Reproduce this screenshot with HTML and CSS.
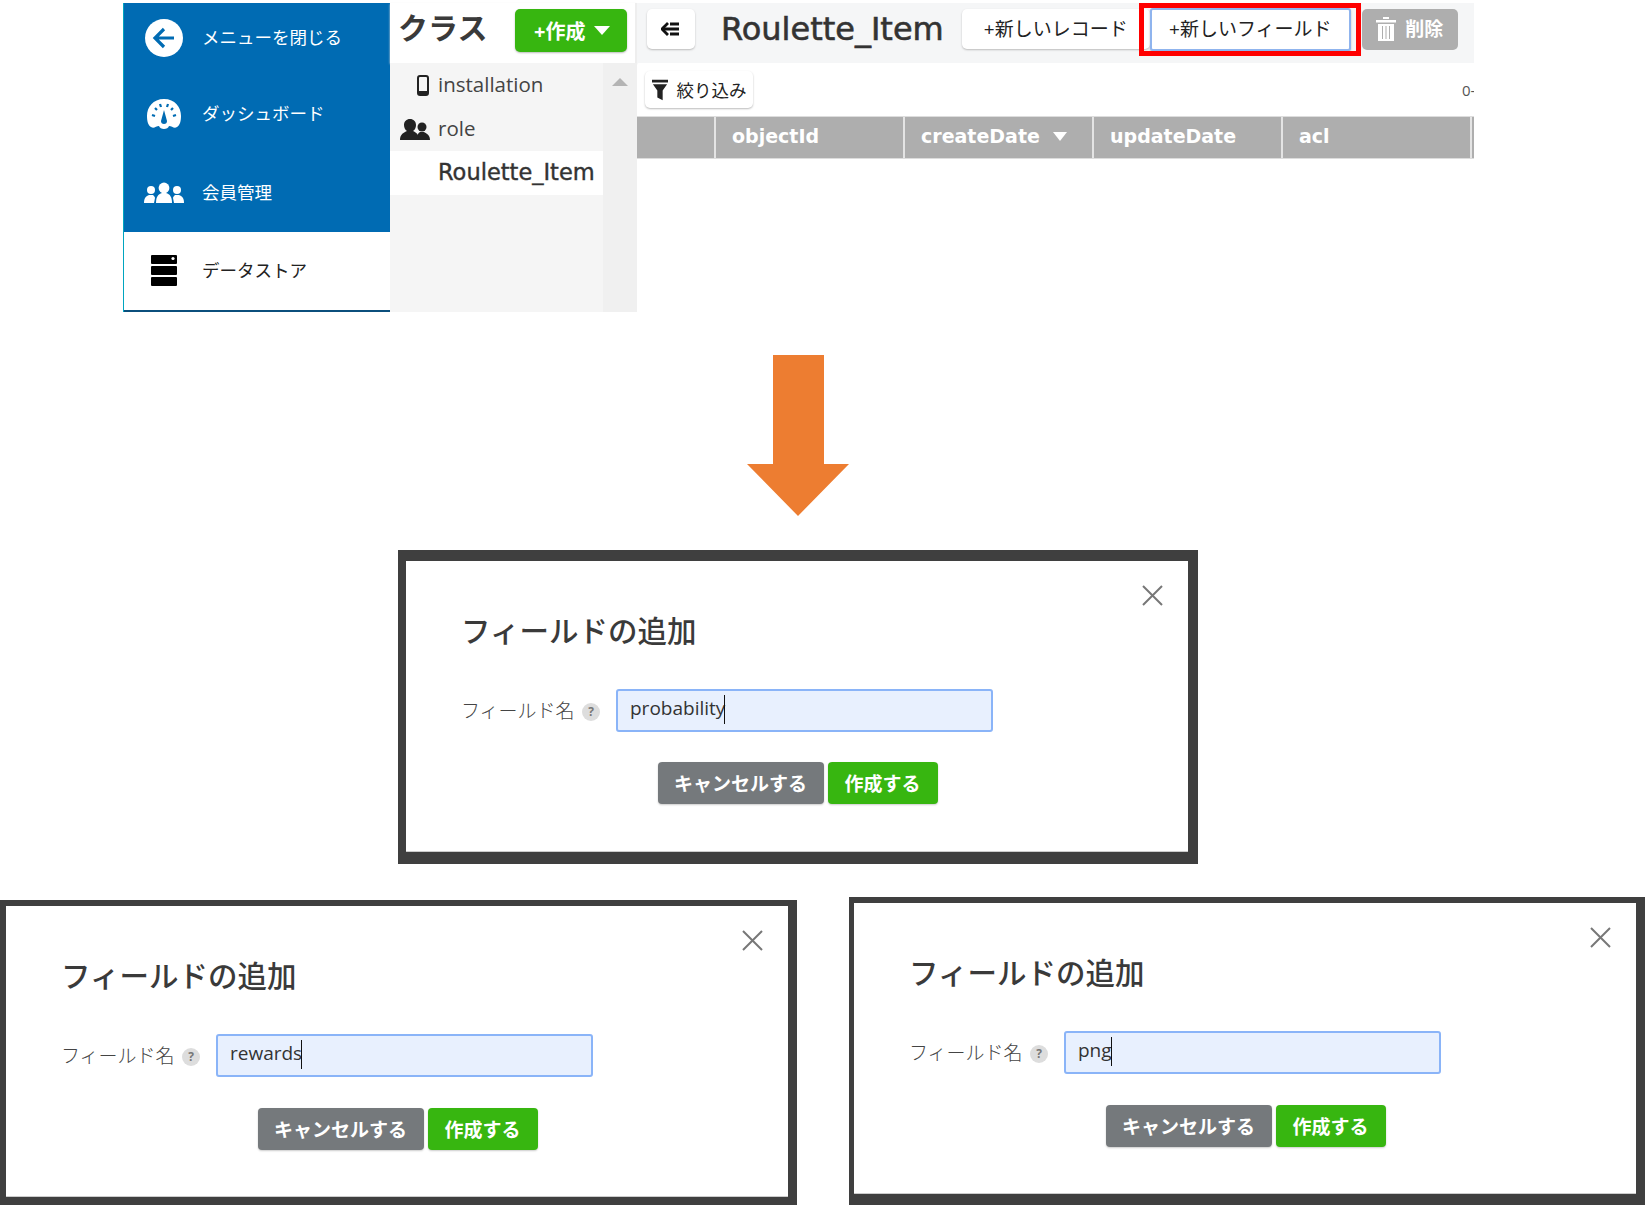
FILE: index.html
```html
<!DOCTYPE html>
<html lang="ja">
<head>
    <meta charset="UTF-8">
    <title>フィールドの追加</title>
    <link rel="stylesheet" href="styles.css">
</head>
<body>
    <!-- Data store screen -->
    <div class="panel">
        <div class="sidebar">
            <div class="nav-item nav-first">
                <svg class="nav-icon" width="40" height="40" viewBox="0 0 40 40">
                    <circle cx="20" cy="20" r="19" fill="#fff"/>
                    <path d="M30 20H12M20 11l-9 9 9 9" fill="none" stroke="#006bb3" stroke-width="3.2"/>
                </svg>
                <span>メニューを閉じる</span>
            </div>
            <div class="nav-item nav-second">
                <svg class="nav-icon" width="40" height="36" viewBox="0 0 40 36">
                    <path d="M20 2C9 2 3 10 3 19c0 5 1 9 4 11 3 2 5-1 8-1 1 4 9 4 10 0 3 0 5 3 8 1 3-2 4-6 4-11C37 10 31 2 20 2z" fill="#fff"/>
                    <path d="M8 18l3 1M11 11l2 2M16 7l1 3M24 7l-1 3M29 11l-2 2M32 18l-3 1" stroke="#006bb3" stroke-width="2.2"/>
                    <path d="M20 13l-3 11a3 3 0 1 0 6 0z" fill="#006bb3"/>
                </svg>
                <span>ダッシュボード</span>
            </div>
            <div class="nav-item">
                <svg class="nav-icon" width="40" height="22" viewBox="0 0 40 22" fill="#fff">
                    <circle cx="7" cy="8" r="4"/>
                    <path d="M0 21c0-5 2-7 5-8h4c1 1 2 2 2 3l-1 5z"/>
                    <circle cx="33" cy="8" r="4"/>
                    <path d="M40 21c0-5-2-7-5-8h-4c-1 1-2 2-2 3l1 5z"/>
                    <circle cx="20" cy="6" r="5.400"/>
                    <path d="M12 21c0-6 2-9 6-10h4c4 1 6 4 6 10z"/>
                </svg>
                <span>会員管理</span>
            </div>
            <div class="nav-item nav-active">
                <svg class="nav-icon" width="28" height="32" viewBox="0 0 28 32">
                    <rect x="1" y="0" width="26" height="9" rx="1"/>
                    <rect x="1" y="11" width="26" height="9" rx="1"/>
                    <rect x="1" y="22" width="26" height="9" rx="1"/>
                    <circle cx="23" cy="3.5" r="1.6" fill="#fff"/>
                </svg>
                <span>データストア</span>
            </div>
        </div>

        <div class="classes">
            <div class="classes-head">
                <h2>クラス</h2>
                <button class="btn-create">+作成<i class="caret"></i></button>
            </div>
            <div class="classes-body">
                <ul class="class-list">
                    <li>
                        <svg class="class-icon" width="14" height="21" viewBox="0 0 14 21">
                            <rect x="2" y="1" width="10" height="19" rx="2" fill="none" stroke="#222" stroke-width="2"/>
                            <rect x="2" y="16" width="10" height="4" fill="#222"/>
                        </svg>
                        installation
                    </li>
                    <li>
                        <svg class="class-icon icon-role" width="30" height="22" viewBox="0 0 30 22" fill="#222">
                            <circle cx="22" cy="8" r="4.500"/>
                            <path d="M17 21c0-5 1-7 3-8h4c2 1 6 3 6 8z"/>
                            <path d="M10 0c3.500 0 6 2.500 6 6 0 2.500-1 5-3 6 3 1.500 6 3 6 9H0c0-6 4-7.500 7-9-2-1-3-3.500-3-6 0-3.500 2.500-6 6-6z"/>
                        </svg>
                        role
                    </li>
                    <li class="class-current">Roulette_Item</li>
                </ul>
                <div class="scrollbar"><i class="scroll-up"></i></div>
            </div>
        </div>

        <div class="main">
            <div class="topbar">
                <button class="btn-white btn-back">
                    <svg width="20" height="14" viewBox="0 0 20 14">
                        <path d="M7 1L1 7l6 6" fill="none" stroke="#111" stroke-width="2.800"/>
                        <path d="M2 7h16M9 2h9M9 12h9" stroke="#111" stroke-width="2.800"/>
                    </svg>
                </button>
                <h1>Roulette_Item</h1>
                <button class="btn-white btn-record">+新しいレコード</button>
                <button class="btn-white btn-field">+新しいフィールド<span class="highlight"></span></button>
                <button class="btn-delete">
                    <svg width="20" height="25" viewBox="0 0 20 25" fill="#fff">
                        <path d="M0 4h20v2.500H0zM7 1h6v2H7z"/>
                        <path d="M2 8h16v17H2zM6 10v13h1V10zM9.500 10v13h1V10zM13 10v13h1V10z" fill-rule="evenodd"/>
                    </svg>
                    削除
                </button>
            </div>
            <div class="toolbar">
                <button class="btn-white btn-filter">
                    <svg width="16" height="22" viewBox="0 0 18 23" fill="#222">
                        <path d="M0 0h18v3H0zM1 5h16l-5 7v11l-6-3v-8z"/>
                    </svg>
                    絞り込み
                </button>
                <span class="pager">0-</span>
            </div>
            <div class="table-head">
                <div class="col col-check"></div>
                <div class="col">objectId</div>
                <div class="col">createDate<i class="caret caret-sort"></i></div>
                <div class="col">updateDate</div>
                <div class="col">acl</div>
            </div>
        </div>
    </div>

    <svg class="down-arrow" width="102" height="161" viewBox="0 0 102 161">
        <path d="M26 0h51v109h25l-51 52L0 109h26z" fill="#ed7d31"/>
    </svg>

    <!-- Add field dialogs -->
    <div class="dialog dialog-main">
        <div class="dialog-inner">
            <svg class="close" width="21" height="21" viewBox="0 0 21 21">
                <path d="M1 1l19 19M20 1L1 20" stroke="#777" stroke-width="2"/>
            </svg>
            <h3>フィールドの追加</h3>
            <div class="field-row">
                <label>フィールド名</label>
                <span class="help">?</span>
                <div class="field-input"><span class="typed">probability</span></div>
            </div>
            <div class="actions">
                <button class="btn-cancel">キャンセルする</button>
                <button class="btn-submit">作成する</button>
            </div>
        </div>
    </div>

    <div class="dialog-row">
        <div class="dialog dialog-left">
            <div class="dialog-inner">
                <svg class="close" width="21" height="21" viewBox="0 0 21 21">
                    <path d="M1 1l19 19M20 1L1 20" stroke="#777" stroke-width="2"/>
                </svg>
                <h3>フィールドの追加</h3>
                <div class="field-row">
                    <label>フィールド名</label>
                    <span class="help">?</span>
                    <div class="field-input"><span class="typed">rewards</span></div>
                </div>
                <div class="actions">
                    <button class="btn-cancel">キャンセルする</button>
                    <button class="btn-submit">作成する</button>
                </div>
            </div>
        </div>

        <div class="dialog dialog-right">
            <div class="dialog-inner">
                <svg class="close" width="21" height="21" viewBox="0 0 21 21">
                    <path d="M1 1l19 19M20 1L1 20" stroke="#777" stroke-width="2"/>
                </svg>
                <h3>フィールドの追加</h3>
                <div class="field-row">
                    <label>フィールド名</label>
                    <span class="help">?</span>
                    <div class="field-input"><span class="typed">png</span></div>
                </div>
                <div class="actions">
                    <button class="btn-cancel">キャンセルする</button>
                    <button class="btn-submit">作成する</button>
                </div>
            </div>
        </div>
    </div>
</body>
</html>
```

FILE: styles.css
```css
* {
    box-sizing: border-box;
}

body {
    font-family: "Open Sans", "Noto Sans CJK JP", sans-serif;
    background-color: #fff;
    color: #333;
    margin: 0;
    height: 1205px;
    width: 1645px;
    overflow: hidden;
}

button {
    font-family: inherit;
    border: none;
    padding: 0;
}

/* Top screen */
.panel {
    display: flex;
    width: 1351px;
    height: 309px;
    margin: 3px 0 0 123px;
}

.sidebar {
    width: 267px;
    flex-shrink: 0;
    background-color: #006bb3;
    border-left: 1px solid #00a5c0;
}

.nav-item {
    position: relative;
    display: flex;
    align-items: center;
    height: 79px;
    padding: 0 0 3px 78px;
    color: #fff;
    font-size: 17.500px;
}

.nav-first {
    height: 69px;
}

.nav-second {
    height: 81px;
    padding-bottom: 1px;
}

.nav-active {
    height: 80px;
    background-color: #fff;
    color: #222;
    border-bottom: 2px solid #0b4f7c;
}

.nav-icon {
    position: absolute;
    left: 40px;
    top: 50%;
    transform: translate(-50%, -50%);
}

.nav-second .nav-icon {
    top: 53%;
}

.classes {
    width: 247px;
    flex-shrink: 0;
    display: flex;
    flex-direction: column;
}

.classes-head {
    display: flex;
    align-items: flex-start;
    height: 60px;
    padding: 6px 0 0 8px;
    border-right: 2px solid #eee;
    box-shadow: 0 1px 2px #ddd;
}

.classes-head h2 {
    margin: 0;
    font-size: 30px;
    font-weight: 700;
    line-height: 38px;
    width: 117px;
    color: #3a3a3a;
}

.btn-create {
    display: flex;
    align-items: center;
    width: 112px;
    height: 43px;
    padding: 0 0 1px 19px;
    border-radius: 5px;
    background-color: #37b610;
    color: #fff;
    font-size: 20px;
    font-weight: 700;
    box-shadow: 0 1px 2px #bbb;
}

.caret {
    display: inline-block;
    width: 0;
    height: 0;
    margin-left: 9px;
    border-left: 8px solid transparent;
    border-right: 8px solid transparent;
    border-top: 9px solid #fff;
}

.classes-body {
    flex: 1;
    display: flex;
    background-color: #f5f5f5;
}

.class-list {
    list-style: none;
    margin: 0;
    padding: 0;
    width: 213px;
}

.class-list li {
    position: relative;
    height: 44px;
    padding-left: 48px;
    font-size: 20.500px;
    line-height: 43px;
    color: #444;
}

.class-list .class-current {
    background-color: #fff;
    color: #333;
    font-family: "DejaVu Sans", sans-serif;
    font-size: 22.500px;
    -webkit-text-stroke: 0.4px #333;
    white-space: nowrap;
}

.class-icon {
    position: absolute;
    left: 26px;
    top: 12px;
}

.icon-role {
    left: 10px;
}

.scrollbar {
    width: 34px;
    background-color: #f0f0f0;
    padding-top: 15px;
}

.scroll-up {
    display: block;
    width: 0;
    height: 0;
    margin: 0 auto;
    border-left: 8px solid transparent;
    border-right: 8px solid transparent;
    border-bottom: 8px solid #b4b4b4;
}

.main {
    flex: 1;
    min-width: 0;
    overflow: visible;
}

.topbar {
    display: flex;
    align-items: center;
    height: 60px;
    padding: 0 16px 8px 10px;
    background-color: #f5f6f7;
}

.topbar h1 {
    margin: 0 19px 0 26px;
    font-family: "DejaVu Sans", sans-serif;
    font-size: 32px;
    font-weight: 400;
    -webkit-text-stroke: 0.6px #333;
    color: #333;
    width: 222px;
    white-space: nowrap;
}

.btn-white {
    position: relative;
    display: flex;
    align-items: center;
    justify-content: center;
    height: 40px;
    border-radius: 5px;
    background-color: #fff;
    color: #222;
    font-size: 19px;
    box-shadow: 0 1px 2px #bbb;
}

.btn-back {
    width: 48px;
}

.btn-record {
    width: 188px;
    padding-bottom: 3px;
}

.btn-field {
    width: 202px;
    height: 43px;
    padding-bottom: 3px;
    border: 2px solid #8fb4ee;
    border-radius: 3px;
}

/* Red frame around the button */
.highlight {
    position: absolute;
    left: -13px;
    right: -12px;
    top: -7px;
    bottom: -7px;
    border: 5px solid #f00;
}

.btn-delete {
    display: flex;
    align-items: center;
    gap: 9px;
    width: 96px;
    height: 41px;
    margin-left: 11px;
    padding: 0 0 2px 14px;
    border-radius: 5px;
    background-color: #aeaeae;
    color: #fff;
    font-size: 19px;
    font-weight: 700;
}

.toolbar {
    display: flex;
    align-items: center;
    justify-content: space-between;
    height: 53px;
    padding: 0 0 0 8px;
}

.btn-filter {
    width: 108px;
    height: 37px;
    gap: 9px;
    font-size: 17.500px;
}

.pager {
    width: 12px;
    overflow: hidden;
    font-size: 15px;
    color: #555;
}

.table-head {
    display: flex;
    height: 43px;
    background-color: #aeaeae;
    border-top: 1px solid #ddd;
    border-bottom: 1px solid #ddd;
    color: #fff;
    font-family: "DejaVu Sans", sans-serif;
    font-size: 19px;
    font-weight: 700;
    line-height: 39px;
}

.col {
    width: 189px;
    flex-shrink: 0;
    padding-left: 16px;
    border-right: 2px solid #e4e4e4;
    white-space: nowrap;
    overflow: hidden;
}

.col-check {
    width: 79px;
}

.caret-sort {
    margin-left: 13px;
    vertical-align: 2px;
    border-left-width: 7px;
    border-right-width: 7px;
}

.down-arrow {
    display: block;
    margin: 43px 0 0 747px;
}

/* Dialogs */
.dialog {
    background-color: #3f3f3f;
}

.dialog-main {
    width: 800px;
    margin: 34px 0 0 398px;
    padding: 11px 10px 12px 8px;
}

.dialog-row {
    display: flex;
    justify-content: space-between;
    align-items: flex-start;
    margin-top: 33px;
}

.dialog-left {
    width: 797px;
    margin-top: 3px;
    padding: 6px 9px 8px 6px;
}

.dialog-right {
    width: 796px;
    padding: 6px 9px 11px 5px;
}

.dialog-inner {
    position: relative;
    height: 291px;
    background-color: #fff;
    padding: 50px 0 0 55px;
    border-bottom: 1px solid #ccc;
}

.close {
    position: absolute;
    right: 25px;
    top: 24px;
}

.dialog-inner h3 {
    margin: 0;
    height: 40px;
    font-size: 29.500px;
    font-weight: 500;
    line-height: 40px;
    color: #3a3a3a;
}

.field-row {
    display: flex;
    align-items: center;
    height: 43px;
    margin-top: 38px;
}

.field-row label {
    width: 121px;
    margin-top: -2px;
    font-size: 19px;
    font-weight: 300;
    color: #444;
    white-space: nowrap;
}

.help {
    width: 18px;
    height: 18px;
    margin: 3px 16px 0 0;
    border-radius: 50%;
    background-color: #ddd;
    color: #777;
    font-size: 12px;
    font-weight: 700;
    line-height: 18px;
    text-align: center;
}

.field-input {
    width: 377px;
    height: 43px;
    padding-left: 12px;
    border: 2.500px solid #8ab4f8;
    border-radius: 3px;
    background-color: #e8f0fe;
    color: #333;
    font-size: 19px;
    line-height: 34px;
}

.typed {
    display: inline-block;
    position: relative;
}

/* Text cursor */
.typed::after {
    content: "";
    position: absolute;
    right: 0;
    top: 4px;
    bottom: 1px;
    border-right: 1px solid #111;
}

.actions {
    display: flex;
    justify-content: center;
    gap: 4px;
    margin: 30px 0 0 -54px;
}

.dialog-row .actions {
    margin-top: 31px;
}

.btn-cancel,
.btn-submit {
    height: 42px;
    border-radius: 4px;
    color: #fff;
    font-size: 19px;
    font-weight: 700;
    box-shadow: 0 1px 2px #ccc;
}

.btn-cancel {
    width: 166px;
    background-color: #75797c;
}

.btn-submit {
    width: 110px;
    background-color: #37b610;
}
```
